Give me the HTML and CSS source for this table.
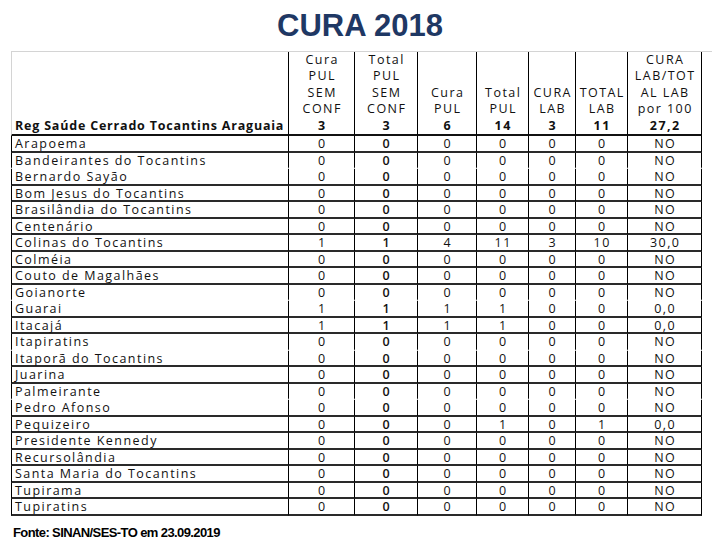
FILE: index.html
```html
<!DOCTYPE html>
<html lang="pt-BR">
<head>
<meta charset="utf-8">
<title>CURA 2018</title>
<link rel="stylesheet" href="styles.css">
</head>
<body>
<h1 class="title">CURA 2018</h1>
<div class="sheet">
<table class="grid">
<colgroup>
<col class="c-name"><col class="c1"><col class="c2"><col class="c3"><col class="c4"><col class="c5"><col class="c6"><col class="c7">
</colgroup>
<thead>
<tr>
<th class="name">Reg Saúde Cerrado Tocantins Araguaia</th>
<th>Cura<br>PUL<br>SEM<br>CONF<br><b>3</b></th>
<th>Total<br>PUL<br>SEM<br>CONF<br><b>3</b></th>
<th>Cura<br>PUL<br><b>6</b></th>
<th>Total<br>PUL<br><b>14</b></th>
<th>CURA<br>LAB<br><b>3</b></th>
<th>TOTAL<br>LAB<br><b>11</b></th>
<th>CURA<br>LAB/TOT<br>AL LAB<br>por 100<br><b>27,2</b></th>
</tr>
</thead>
<tbody>
<tr><td class="name">Arapoema</td><td>0</td><td class="bold">0</td><td>0</td><td>0</td><td>0</td><td>0</td><td>NO</td></tr>
<tr class="nb"><td class="name">Bandeirantes do Tocantins</td><td>0</td><td class="bold">0</td><td>0</td><td>0</td><td>0</td><td>0</td><td>NO</td></tr>
<tr><td class="name">Bernardo Sayão</td><td>0</td><td class="bold">0</td><td>0</td><td>0</td><td>0</td><td>0</td><td>NO</td></tr>
<tr><td class="name">Bom Jesus do Tocantins</td><td>0</td><td class="bold">0</td><td>0</td><td>0</td><td>0</td><td>0</td><td>NO</td></tr>
<tr><td class="name">Brasilândia do Tocantins</td><td>0</td><td class="bold">0</td><td>0</td><td>0</td><td>0</td><td>0</td><td>NO</td></tr>
<tr><td class="name">Centenário</td><td>0</td><td class="bold">0</td><td>0</td><td>0</td><td>0</td><td>0</td><td>NO</td></tr>
<tr><td class="name">Colinas do Tocantins</td><td>1</td><td class="bold">1</td><td>4</td><td>11</td><td>3</td><td>10</td><td>30,0</td></tr>
<tr><td class="name">Colméia</td><td>0</td><td class="bold">0</td><td>0</td><td>0</td><td>0</td><td>0</td><td>NO</td></tr>
<tr><td class="name">Couto de Magalhães</td><td>0</td><td class="bold">0</td><td>0</td><td>0</td><td>0</td><td>0</td><td>NO</td></tr>
<tr class="nb"><td class="name">Goianorte</td><td>0</td><td class="bold">0</td><td>0</td><td>0</td><td>0</td><td>0</td><td>NO</td></tr>
<tr><td class="name">Guarai</td><td>1</td><td class="bold">1</td><td>1</td><td>1</td><td>0</td><td>0</td><td>0,0</td></tr>
<tr><td class="name">Itacajá</td><td>1</td><td class="bold">1</td><td>1</td><td>1</td><td>0</td><td>0</td><td>0,0</td></tr>
<tr class="nb"><td class="name">Itapiratins</td><td>0</td><td class="bold">0</td><td>0</td><td>0</td><td>0</td><td>0</td><td>NO</td></tr>
<tr><td class="name">Itaporã do Tocantins</td><td>0</td><td class="bold">0</td><td>0</td><td>0</td><td>0</td><td>0</td><td>NO</td></tr>
<tr><td class="name">Juarina</td><td>0</td><td class="bold">0</td><td>0</td><td>0</td><td>0</td><td>0</td><td>NO</td></tr>
<tr class="nb"><td class="name">Palmeirante</td><td>0</td><td class="bold">0</td><td>0</td><td>0</td><td>0</td><td>0</td><td>NO</td></tr>
<tr><td class="name">Pedro Afonso</td><td>0</td><td class="bold">0</td><td>0</td><td>0</td><td>0</td><td>0</td><td>NO</td></tr>
<tr><td class="name">Pequizeiro</td><td>0</td><td class="bold">0</td><td>0</td><td>1</td><td>0</td><td>1</td><td>0,0</td></tr>
<tr><td class="name">Presidente Kennedy</td><td>0</td><td class="bold">0</td><td>0</td><td>0</td><td>0</td><td>0</td><td>NO</td></tr>
<tr><td class="name">Recursolândia</td><td>0</td><td class="bold">0</td><td>0</td><td>0</td><td>0</td><td>0</td><td>NO</td></tr>
<tr><td class="name">Santa Maria do Tocantins</td><td>0</td><td class="bold">0</td><td>0</td><td>0</td><td>0</td><td>0</td><td>NO</td></tr>
<tr><td class="name">Tupirama</td><td>0</td><td class="bold">0</td><td>0</td><td>0</td><td>0</td><td>0</td><td>NO</td></tr>
<tr><td class="name">Tupiratins</td><td>0</td><td class="bold">0</td><td>0</td><td>0</td><td>0</td><td>0</td><td>NO</td></tr>
</tbody>
</table>
</div>
<p class="source">Fonte: SINAN/SES-TO em 23.09.2019</p>
</body>
</html>
```
FILE: styles.css
```css
html, body {
  margin: 0;
  padding: 0;
  background: #ffffff;
}
body {
  width: 720px;
  height: 540px;
  overflow: hidden;
  font-family: "Open Sans", "Noto Sans", sans-serif;
  color: #111;
}
.title {
  margin: 8px 0 0;
  text-align: center;
  font-family: "Liberation Sans", Arial, sans-serif;
  font-weight: bold;
  font-size: 31px;
  line-height: 36px;
  color: #1f3864;
}
.sheet {
  margin: 7px 0 0 11px;
  width: 701px;
  border-top: 1px solid #d4d4d4;
}
.grid {
  border-collapse: separate;
  border-spacing: 0;
  table-layout: fixed;
  width: 691px;
  font-size: 12.5px;
  letter-spacing: 1.45px;
  color: #111;
}
.c-name { width: 278px; }
.c1 { width: 66px; }
.c2 { width: 63px; }
.c3 { width: 59px; }
.c4 { width: 52px; }
.c5 { width: 47px; }
.c6 { width: 52px; }
.c7 { width: 74px; }
.grid th,
.grid td {
  padding: 0 0 0 1.45px;
  border-right: 1px solid #000;
  text-align: center;
  white-space: nowrap;
}
.grid th {
  font-weight: normal;
  line-height: 16.4px;
  vertical-align: bottom;
  border-bottom: 2px solid #111;
}
.grid th b {
  font-weight: bold;
}
.grid th.name {
  text-align: left;
  padding-left: 3px;
  font-weight: bold;
  letter-spacing: 0.8px;
  border-left: 1px solid #d4d4d4;
}
.grid td {
  padding-top: 1px;
  line-height: 13.5px;
  border-bottom: 2px solid #2a2a2a;
}
.grid td.name {
  text-align: left;
  padding-left: 3px;
  border-left: 1px solid #000;
}
.grid td.bold {
  font-weight: 600;
}
.grid tr.nb td {
  border-bottom-color: transparent;
}
.source {
  margin: 9px 0 0 13px;
  font-family: "Liberation Sans", Arial, sans-serif;
  font-weight: bold;
  font-size: 13px;
  line-height: 16px;
  letter-spacing: -0.6px;
  color: #000;
}
```
